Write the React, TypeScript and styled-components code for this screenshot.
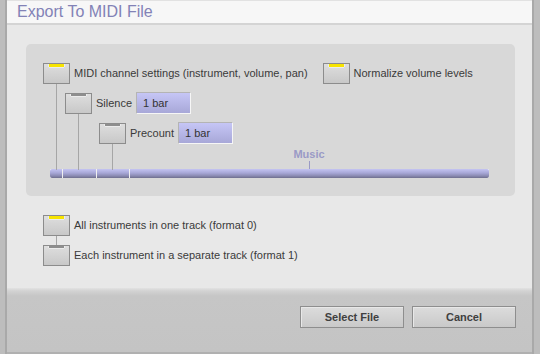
import React from 'react';
import styled, { createGlobalStyle } from 'styled-components';

const GlobalStyle = createGlobalStyle`
  html, body {
    margin: 0;
    padding: 0;
    background: #bdbdbd;
  }
  body {
    font-family: "Liberation Sans", Arial, sans-serif;
    font-size: 11px;
    color: #3a3a3a;
  }
`;

const Frame = styled.div`
  width: 540px;
  height: 354px;
  box-sizing: border-box;
  padding: 0 6px 0 5px;
  background: #bdbdbd;
  display: flex;
`;

const Window = styled.div`
  flex: 1;
  display: flex;
  flex-direction: column;
  border-left: 2px solid #a9a9a9;
  border-right: 2px solid #a9a9a9;
  background: #e8e8e8;
`;

const TitleBar = styled.div`
  height: 25px;
  box-sizing: border-box;
  border-top: 1px solid #e2e2e2;
  border-bottom: 2px solid #d4d4d4;
  background: #f7f7f7;
  padding-left: 10px;
  display: flex;
  align-items: center;
  font-size: 16px;
  color: #8282b6;
`;

const Main = styled.div`
  flex: 1;
  display: flex;
  flex-direction: column;
`;

const Panel = styled.div`
  margin: 19px 17px 0 19px;
  height: 152px;
  box-sizing: border-box;
  padding: 18px 26px 18px 17px;
  background: #d8d8d8;
  border-radius: 5px;
  display: flex;
  flex-direction: column;
`;

const Row = styled.div<{ $indent?: number; $gap?: number }>`
  display: flex;
  align-items: center;
  height: 22px;
  padding-left: ${p => p.$indent ?? 0}px;
  margin-top: ${p => p.$gap ?? 0}px;
`;

const Option = styled.div<{ $offset?: number }>`
  display: flex;
  align-items: center;
  gap: 4px;
  margin-left: ${p => p.$offset ?? 0}px;
`;

const Check = styled.span<{ $checked?: boolean; $stem?: number }>`
  position: relative;
  width: 27px;
  height: 21px;
  box-sizing: border-box;
  border: 1px solid #8c8c8c;
  background: linear-gradient(#dedede, #c8c8c8);
  display: flex;
  justify-content: center;
  align-items: flex-start;
  flex-shrink: 0;

  &::before {
    content: '';
    width: 15px;
    height: ${p => (p.$checked ? 3 : 2)}px;
    background: ${p => (p.$checked ? '#f7e400' : '#8e8e8e')};
    box-shadow: 0 1px 0 #ececec, 1px 0 0 #ececec, -1px 0 0 #ececec;
  }

  &::after {
    content: '';
    display: ${p => (p.$stem ? 'block' : 'none')};
    position: absolute;
    left: 12px;
    top: calc(100% + 1px);
    width: 1px;
    height: ${p => p.$stem ?? 0}px;
    background: #a6a6a6;
  }
`;

const Label = styled.span`
  white-space: nowrap;
  line-height: 21px;
`;

const Field = styled.div`
  width: 55px;
  height: 22px;
  box-sizing: border-box;
  margin-left: 4px;
  padding-left: 6px;
  border-top: 1px solid #b4b4b4;
  border-left: 1px solid #b4b4b4;
  border-right: 1px solid #f6f6f6;
  border-bottom: 1px solid #f6f6f6;
  background: linear-gradient(#c6c6f6, #a8a8d8);
  display: flex;
  align-items: center;
  color: #333;
`;

const MarkerRow = styled.div`
  margin-top: 4px;
  margin-left: 7px;
  display: flex;
`;

const Marker = styled.div<{ $at: number }>`
  width: 40px;
  margin-left: ${p => p.$at - 20}px;
  display: flex;
  flex-direction: column;
  align-items: center;
  font-weight: bold;
  font-size: 11px;
  line-height: 12px;
  color: #9a9ac6;

  &::after {
    content: '';
    width: 1px;
    height: 8px;
    margin-top: 1px;
    background: #9a9ac6;
  }
`;

const Bar = styled.div`
  margin-left: 7px;
  width: 439px;
  height: 9px;
  display: flex;
  gap: 1px;
  background: #f0f0f0;
`;

const Segment = styled.div`
  height: 100%;
  background: linear-gradient(#c4c4f2, #a6a6d6 45%, #8c8cb4 75%, #6e6e8e);
  &:first-child {
    border-radius: 2px 0 0 2px;
  }
  &:last-child {
    border-radius: 0 2px 2px 0;
  }
`;

const Formats = styled.div`
  margin: 19px 0 0 36px;
  display: flex;
  flex-direction: column;
  gap: 9px;
`;

const FormatRow = styled.div`
  display: flex;
  align-items: center;
  gap: 4px;
  height: 21px;
`;

const Footer = styled.div`
  height: 66px;
  box-sizing: border-box;
  border-bottom: 2px solid #b0b0b0;
  background: linear-gradient(#e2e2e2 0, #d2d2d2 3px, #c6c6c6 8px, #c4c4c4);
  padding: 18px 16px 0 0;
  display: flex;
  justify-content: flex-end;
  align-items: flex-start;
  gap: 8px;
`;

const Button = styled.button`
  width: 104px;
  height: 22px;
  box-sizing: border-box;
  border: 1px solid #8e8e8e;
  background: linear-gradient(#dcdcdc, #c9c9c9);
  box-shadow: inset 1px 1px 0 #e8e8e8;
  font-family: "Liberation Sans", Arial, sans-serif;
  font-size: 11px;
  font-weight: bold;
  color: #404040;
  padding: 0;
  cursor: pointer;
`;

const segments = [12, 33, 32, 359];

const App: React.FC = () => {
  return (
    <>
      <GlobalStyle />
      <Frame>
        <Window>
          <TitleBar>Export To MIDI File</TitleBar>
          <Main>
            <Panel>
              <Row>
                <Option>
                  <Check $checked $stem={86} />
                  <Label>MIDI channel settings (instrument, volume, pan)</Label>
                </Option>
                <Option $offset={15}>
                  <Check $checked />
                  <Label>Normalize volume levels</Label>
                </Option>
              </Row>
              <Row $indent={22} $gap={8}>
                <Option>
                  <Check $stem={56} />
                  <Label>Silence</Label>
                </Option>
                <Field>1 bar</Field>
              </Row>
              <Row $indent={56} $gap={8}>
                <Option>
                  <Check $stem={26} />
                  <Label>Precount</Label>
                </Option>
                <Field>1 bar</Field>
              </Row>
              <MarkerRow>
                <Marker $at={259}>Music</Marker>
              </MarkerRow>
              <Bar>
                {segments.map((w, i) => (
                  <Segment key={i} style={{ width: w }} />
                ))}
              </Bar>
            </Panel>
            <Formats>
              <FormatRow>
                <Check $checked $stem={9} />
                <Label>All instruments in one track (format 0)</Label>
              </FormatRow>
              <FormatRow>
                <Check />
                <Label>Each instrument in a separate track (format 1)</Label>
              </FormatRow>
            </Formats>
          </Main>
          <Footer>
            <Button>Select File</Button>
            <Button>Cancel</Button>
          </Footer>
        </Window>
      </Frame>
    </>
  );
};

export default App;
